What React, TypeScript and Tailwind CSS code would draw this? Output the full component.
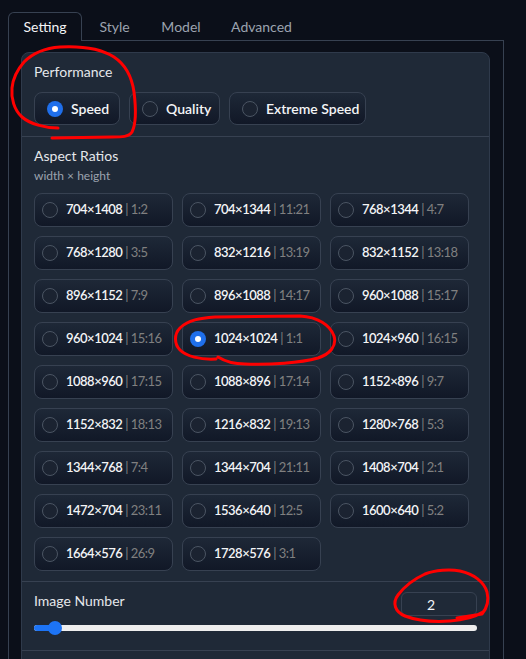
const ratios: [string, string][] = [
  ["704×1408", "1:2"],
  ["704×1344", "11:21"],
  ["768×1344", "4:7"],
  ["768×1280", "3:5"],
  ["832×1216", "13:19"],
  ["832×1152", "13:18"],
  ["896×1152", "7:9"],
  ["896×1088", "14:17"],
  ["960×1088", "15:17"],
  ["960×1024", "15:16"],
  ["1024×1024", "1:1"],
  ["1024×960", "16:15"],
  ["1088×960", "17:15"],
  ["1088×896", "17:14"],
  ["1152×896", "9:7"],
  ["1152×832", "18:13"],
  ["1216×832", "19:13"],
  ["1280×768", "5:3"],
  ["1344×768", "7:4"],
  ["1344×704", "21:11"],
  ["1408×704", "2:1"],
  ["1472×704", "23:11"],
  ["1536×640", "12:5"],
  ["1600×640", "5:2"],
  ["1664×576", "26:9"],
  ["1728×576", "3:1"],
];

function Dot({ on }: { on: boolean }) {
  return on ? (
    <span className="flex h-4 w-4 shrink-0 items-center justify-center rounded-full bg-[#1f6feb]">
      <span className="h-[6px] w-[6px] rounded-full bg-white" />
    </span>
  ) : (
    <span className="h-4 w-4 shrink-0 rounded-full border border-[#4b5563] bg-[#1b2331]" />
  );
}

const optionBox =
  "flex items-center rounded-lg border border-[#374151] bg-linear-to-b from-[#1e2837] to-[#111827]";

export default function App() {
  const perf = ["Speed", "Quality", "Extreme Speed"];
  const perfW = ["w-[86px]", "w-[91px]", "w-[137px]"];

  return (
    <div className="relative h-[659px] w-[526px] overflow-hidden bg-[#0b0f19] font-['Lato',sans-serif] text-[14px]">
      <div className="pl-2 pt-3">
        {/* tabs */}
        <div className="flex h-[29px] w-[496px]">
          <div className="w-[74px] rounded-t-md border border-b-0 border-[#374151] pt-[3px] text-center text-[#f3f4f6]">
            Setting
          </div>
          <div className="flex flex-1 border-b border-[#374151] pt-[4px] text-[#9ca3af]">
            <div className="w-[65px] text-center">Style</div>
            <div className="w-[68px] text-center">Model</div>
            <div className="w-[93px] text-center">Advanced</div>
          </div>
        </div>

        {/* tab body */}
        <div className="h-[640px] w-[496px] border-x border-[#374151] pl-3 pt-[11px]">
          <div className="w-[469px] overflow-hidden rounded-lg border border-[#2f3a4b] bg-[#1f2937]">
            {/* performance */}
            <div className="border-b border-[#374151] px-3 pb-[11px] pt-[9px]">
              <div className="leading-5 text-[#e5e7eb]">Performance</div>
              <div className="mt-[10px] flex gap-[9px]">
                {perf.map((p, i) => (
                  <div key={p} className={`${optionBox} ${perfW[i]} h-[33px] gap-2 pl-3`}>
                    <Dot on={i === 0} />
                    <span className="font-semibold text-[#f3f4f6]">{p}</span>
                  </div>
                ))}
              </div>
            </div>

            {/* aspect ratios */}
            <div className="border-b border-[#374151] px-3 pb-[10px] pt-[9px]">
              <div className="leading-5 text-[#e5e7eb]">Aspect Ratios</div>
              <div className="mt-[2px] text-[12px] leading-4 text-[#9ca3af]">width × height</div>
              <div className="mt-[9px] grid grid-cols-[repeat(3,139px)] gap-[9px]">
                {ratios.map(([size, r]) => (
                  <div key={size} className={`${optionBox} h-[34px] gap-2 pl-[7px]`}>
                    <Dot on={size === "1024×1024"} />
                    <span className="whitespace-nowrap text-[13px] tracking-[-0.5px]">
                      <span className="font-semibold text-[#f3f4f6]">{size}</span>
                      <span className="text-[#808080]"> | {r}</span>
                    </span>
                  </div>
                ))}
              </div>
            </div>

            {/* image number */}
            <div className="border-b border-[#374151] px-3 pb-[15px] pt-[9px]">
              <div className="flex items-start justify-between">
                <div className="leading-5 text-[#e5e7eb]">Image Number</div>
                <div className="mt-[1px] flex h-[24px] w-[76px] items-center justify-center rounded-md border border-[#374151] pr-[16px] text-[#f3f4f6]">
                  2
                </div>
              </div>
              <div className="relative mt-[5px] flex h-[14px] items-center">
                <div className="h-[6px] w-full rounded-full bg-[#eeeeee]" />
                <div className="absolute left-0 top-[4px] h-[6px] w-[21px] rounded-l-full bg-[#1d74f5]" />
                <div className="absolute left-[14px] top-0 h-[14px] w-[14px] rounded-full bg-[#1d74f5]" />
              </div>
            </div>
            <div className="h-[40px]" />
          </div>
        </div>
      </div>

      {/* hand-drawn annotations */}
      <svg
        className="pointer-events-none absolute left-0 top-0"
        width="526"
        height="659"
        viewBox="0 0 526 659"
        fill="none"
        stroke="#ff0000"
        strokeWidth="3"
        strokeLinecap="round"
        strokeLinejoin="round"
      >
        <path d="M58 128 C45 128 30 124 22 117 C14 110 11 98 12 88 C13 78 17 70 24 62 C32 54 45 48 60 47 C80 46 100 48 114 57 C126 65 132 78 134 92 C136 108 136 124 132 132 C129 137 122 137 112 137 L52 138" />
        <path d="M216 359 C200 360 186 356 180 350 C174 344 174 334 180 328 C188 320 200 318 215 317 L300 316 C318 317 330 325 334 336 C337 346 330 354 318 358 C300 363 270 365 245 364 C235 364 226 362 218 357" />
        <path d="M457 618 L482 614 C487 608 489 600 487 592 C484 582 474 574 460 571 C450 569 435 570 425 574 C414 579 404 587 398 595 C392 603 395 612 405 616 C418 621 435 622 450 621 C465 620 475 617 483 612" />
      </svg>
    </div>
  );
}
